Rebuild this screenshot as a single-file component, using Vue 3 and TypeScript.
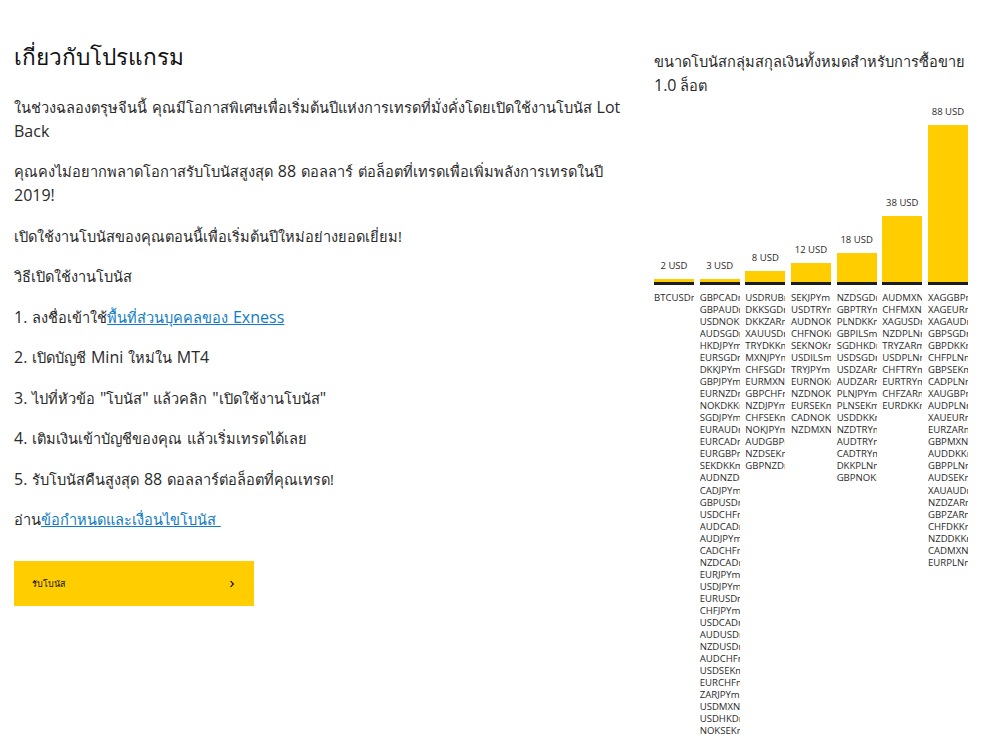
<script setup lang="ts">
interface Col { label: string; height: number; items: string[] }
const w = (s: string) => s.split(' ').map((x) => x + 'm')
const cols: Col[] = [
  { label: '2 USD', height: 3, items: w('BTCUSD') },
  { label: '3 USD', height: 3, items: w('GBPCAD GBPAUD USDNOK AUDSGD HKDJPY EURSGD DKKJPY GBPJPY EURNZD NOKDKK SGDJPY EURAUD EURCAD EURGBP SEKDKK AUDNZD CADJPY GBPUSD USDCHF AUDCAD AUDJPY CADCHF NZDCAD EURJPY USDJPY EURUSD CHFJPY USDCAD AUDUSD NZDUSD AUDCHF USDSEK EURCHF ZARJPY USDMXN USDHKD NOKSEK') },
  { label: '8 USD', height: 11, items: w('USDRUB DKKSGD DKKZAR XAUUSD TRYDKK MXNJPY CHFSGD EURMXN GBPCHF NZDJPY CHFSEK NOKJPY AUDGBP NZDSEK GBPNZD') },
  { label: '12 USD', height: 19, items: w('SEKJPY USDTRY AUDNOK CHFNOK SEKNOK USDILS TRYJPY EURNOK NZDNOK EURSEK CADNOK NZDMXN') },
  { label: '18 USD', height: 29, items: w('NZDSGD GBPTRY PLNDKK GBPILS SGDHKD USDSGD USDZAR AUDZAR PLNJPY PLNSEK USDDKK NZDTRY AUDTRY CADTRY DKKPLN GBPNOK') },
  { label: '38 USD', height: 66, items: w('AUDMXN CHFMXN XAGUSD NZDPLN TRYZAR USDPLN CHFTRY EURTRY CHFZAR EURDKK') },
  { label: '88 USD', height: 157, items: w('XAGGBP XAGEUR XAGAUD GBPSGD GBPDKK CHFPLN GBPSEK CADPLN XAUGBP AUDPLN XAUEUR EURZAR GBPMXN AUDDKK GBPPLN AUDSEK XAUAUD NZDZAR GBPZAR CHFDKK NZDDKK CADMXN EURPLN') },
]
</script>

<template>
  <main class="page">
    <section class="info">
      <h1>เกี่ยวกับโปรแกรม</h1>
      <p>ในช่วงฉลองตรุษจีนนี้ คุณมีโอกาสพิเศษเพื่อเริ่มต้นปีแห่งการเทรดที่มั่งคั่งโดยเปิดใช้งานโบนัส <span class="en">Lot Back</span></p>
      <p>คุณคงไม่อยากพลาดโอกาสรับโบนัสสูงสุด <span class="en">88</span> ดอลลาร์ ต่อล็อตที่เทรดเพื่อเพิ่มพลังการเทรดในปี <span class="en">2019!</span></p>
      <p>เปิดใช้งานโบนัสของคุณตอนนี้เพื่อเริ่มต้นปีใหม่อย่างยอดเยี่ยม!</p>
      <p>วิธีเปิดใช้งานโบนัส</p>
      <p><span class="en">1.</span> ลงชื่อเข้าใช้<a href="#">พื้นที่ส่วนบุคคลของ <span class="en">Exness</span></a></p>
      <p><span class="en">2.</span> เปิดบัญชี <span class="en">Mini</span> ใหม่ใน <span class="en">MT4</span></p>
      <p><span class="en">3.</span> ไปที่หัวข้อ <span class="en">"</span>โบนัส<span class="en">"</span> แล้วคลิก <span class="en">"</span>เปิดใช้งานโบนัส<span class="en">"</span></p>
      <p><span class="en">4.</span> เติมเงินเข้าบัญชีของคุณ แล้วเริ่มเทรดได้เลย</p>
      <p><span class="en">5.</span> รับโบนัสคืนสูงสุด <span class="en">88</span> ดอลลาร์ต่อล็อตที่คุณเทรด!</p>
      <p>อ่าน<a href="#">ข้อกำหนดและเงื่อนไขโบนัส&nbsp;</a></p>
      <button class="cta" type="button">
        <span>รับโบนัส</span>
        <svg width="6" height="8" viewBox="0 0 6 8" aria-hidden="true"><path d="M1.6 1.2 4.4 4 1.6 6.8" fill="none" stroke="#111" stroke-width="1.2" /></svg>
      </button>
    </section>
    <aside class="chart">
      <h2>ขนาดโบนัสกลุ่มสกุลเงินทั้งหมดสำหรับการซื้อขาย <span class="en">1.0</span> ล็อต</h2>
      <div class="cols">
        <div v-for="c in cols" :key="c.label" class="col">
          <div class="plot">
            <span class="val">{{ c.label }}</span>
            <div class="bar" :style="{ height: c.height + 'px' }"></div>
          </div>
          <div class="base"></div>
          <ul>
            <li v-for="i in c.items" :key="i">{{ i }}</li>
          </ul>
        </div>
      </div>
    </aside>
  </main>
</template>

<style>
html, body { overflow: hidden; background: #fff; }
</style>

<style scoped>
.page {
  display: flex;
  height: 738px;
  overflow: hidden;
  font-family: "Open Sans", "Noto Sans", "Noto Sans CJK SC", sans-serif;
  color: #2a2a2a;
}
.info { width: 610px; padding: 40px 0 0 14px; flex: none; }
h1 { margin: 0 0 21px; font-size: 22.6px; line-height: 34px; font-weight: 400; color: #111; }
p { margin: 0 0 16.45px; font-size: 14.6px; line-height: 24px; word-spacing: 1px; }
.en { font-size: 16px; line-height: 1; }
a { color: #0f7cc4; }
.cta {
  display: flex; align-items: center; justify-content: space-between;
  width: 240px; height: 45px; margin-top: 30.5px; padding: 0 19px 0 18px;
  border: 0; background: #ffcd00; color: #111; font: inherit; font-size: 9px;
}
.chart { width: 314px; margin-left: 30px; padding-top: 50px; flex: none; }
h2 { margin: 0 0 7px; font-size: 14.6px; line-height: 23.5px; font-weight: 400; }
.cols { display: flex; justify-content: space-between; }
.col { width: 40px; }
.plot { height: 178px; display: flex; flex-direction: column; justify-content: flex-end; }
.val { font-size: 9.5px; line-height: 14px; margin-bottom: 6px; text-align: center; white-space: nowrap; }
.bar { background: #ffcd00; }
.base { height: 3px; background: #1c1c1c; }
ul { list-style: none; margin: 7px 0 0; padding: 0; }
li { font-size: 9.6px; line-height: 12.03px; overflow: hidden; white-space: nowrap; }
</style>
